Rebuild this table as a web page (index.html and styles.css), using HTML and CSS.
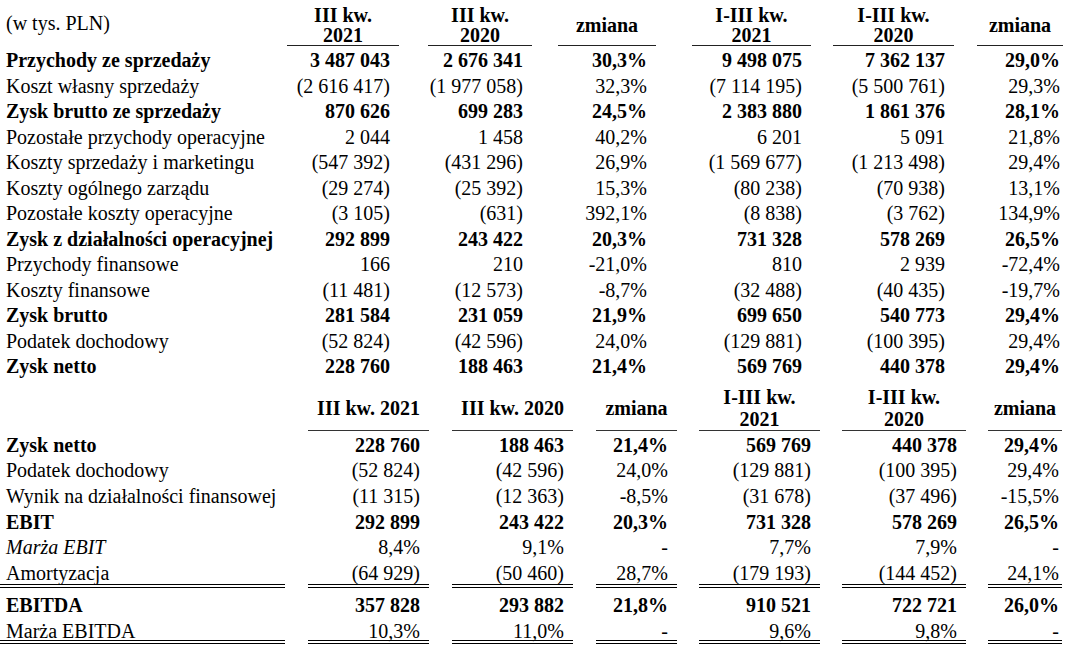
FILE: index.html
```html
<!DOCTYPE html>
<html lang="pl">
<head>
<meta charset="utf-8">
<title>Wyniki finansowe</title>
<link rel="stylesheet" href="styles.css">
</head>
<body>
<div class="sheet">
  <div class="tbl t1">
    <div class="row head">
      <div class="cell lab">(w tys. PLN)</div>
      <div class="cell">III kw.<br>2021</div>
      <div class="cell">III kw.<br>2020</div>
      <div class="cell">zmiana</div>
      <div class="cell">I-III kw.<br>2021</div>
      <div class="cell">I-III kw.<br>2020</div>
      <div class="cell">zmiana</div>
    </div>
    <div class="row b">
      <div class="cell lab">Przychody ze sprzedaży</div>
      <div class="cell">3 487 043</div><div class="cell">2 676 341</div><div class="cell">30,3%</div>
      <div class="cell">9 498 075</div><div class="cell">7 362 137</div><div class="cell">29,0%</div>
    </div>
    <div class="row">
      <div class="cell lab">Koszt własny sprzedaży</div>
      <div class="cell">(2 616 417)</div><div class="cell">(1 977 058)</div><div class="cell">32,3%</div>
      <div class="cell">(7 114 195)</div><div class="cell">(5 500 761)</div><div class="cell">29,3%</div>
    </div>
    <div class="row b">
      <div class="cell lab">Zysk brutto ze sprzedaży</div>
      <div class="cell">870 626</div><div class="cell">699 283</div><div class="cell">24,5%</div>
      <div class="cell">2 383 880</div><div class="cell">1 861 376</div><div class="cell">28,1%</div>
    </div>
    <div class="row">
      <div class="cell lab">Pozostałe przychody operacyjne</div>
      <div class="cell">2 044</div><div class="cell">1 458</div><div class="cell">40,2%</div>
      <div class="cell">6 201</div><div class="cell">5 091</div><div class="cell">21,8%</div>
    </div>
    <div class="row">
      <div class="cell lab">Koszty sprzedaży i marketingu</div>
      <div class="cell">(547 392)</div><div class="cell">(431 296)</div><div class="cell">26,9%</div>
      <div class="cell">(1 569 677)</div><div class="cell">(1 213 498)</div><div class="cell">29,4%</div>
    </div>
    <div class="row">
      <div class="cell lab">Koszty ogólnego zarządu</div>
      <div class="cell">(29 274)</div><div class="cell">(25 392)</div><div class="cell">15,3%</div>
      <div class="cell">(80 238)</div><div class="cell">(70 938)</div><div class="cell">13,1%</div>
    </div>
    <div class="row">
      <div class="cell lab">Pozostałe koszty operacyjne</div>
      <div class="cell">(3 105)</div><div class="cell">(631)</div><div class="cell">392,1%</div>
      <div class="cell">(8 838)</div><div class="cell">(3 762)</div><div class="cell">134,9%</div>
    </div>
    <div class="row b">
      <div class="cell lab">Zysk z działalności operacyjnej</div>
      <div class="cell">292 899</div><div class="cell">243 422</div><div class="cell">20,3%</div>
      <div class="cell">731 328</div><div class="cell">578 269</div><div class="cell">26,5%</div>
    </div>
    <div class="row">
      <div class="cell lab">Przychody finansowe</div>
      <div class="cell">166</div><div class="cell">210</div><div class="cell">-21,0%</div>
      <div class="cell">810</div><div class="cell">2 939</div><div class="cell">-72,4%</div>
    </div>
    <div class="row">
      <div class="cell lab">Koszty finansowe</div>
      <div class="cell">(11 481)</div><div class="cell">(12 573)</div><div class="cell">-8,7%</div>
      <div class="cell">(32 488)</div><div class="cell">(40 435)</div><div class="cell">-19,7%</div>
    </div>
    <div class="row b">
      <div class="cell lab">Zysk brutto</div>
      <div class="cell">281 584</div><div class="cell">231 059</div><div class="cell">21,9%</div>
      <div class="cell">699 650</div><div class="cell">540 773</div><div class="cell">29,4%</div>
    </div>
    <div class="row">
      <div class="cell lab">Podatek dochodowy</div>
      <div class="cell">(52 824)</div><div class="cell">(42 596)</div><div class="cell">24,0%</div>
      <div class="cell">(129 881)</div><div class="cell">(100 395)</div><div class="cell">29,4%</div>
    </div>
    <div class="row b">
      <div class="cell lab">Zysk netto</div>
      <div class="cell">228 760</div><div class="cell">188 463</div><div class="cell">21,4%</div>
      <div class="cell">569 769</div><div class="cell">440 378</div><div class="cell">29,4%</div>
    </div>
  </div>

  <div class="tbl t2">
    <div class="row head">
      <div class="cell lab"></div>
      <div class="cell">III kw. 2021</div>
      <div class="cell">III kw. 2020</div>
      <div class="cell">zmiana</div>
      <div class="cell">I-III kw.<br>2021</div>
      <div class="cell">I-III kw.<br>2020</div>
      <div class="cell">zmiana</div>
    </div>
    <div class="row b">
      <div class="cell lab">Zysk netto</div>
      <div class="cell">228 760</div><div class="cell">188 463</div><div class="cell">21,4%</div>
      <div class="cell">569 769</div><div class="cell">440 378</div><div class="cell">29,4%</div>
    </div>
    <div class="row">
      <div class="cell lab">Podatek dochodowy</div>
      <div class="cell">(52 824)</div><div class="cell">(42 596)</div><div class="cell">24,0%</div>
      <div class="cell">(129 881)</div><div class="cell">(100 395)</div><div class="cell">29,4%</div>
    </div>
    <div class="row">
      <div class="cell lab">Wynik na działalności finansowej</div>
      <div class="cell">(11 315)</div><div class="cell">(12 363)</div><div class="cell">-8,5%</div>
      <div class="cell">(31 678)</div><div class="cell">(37 496)</div><div class="cell">-15,5%</div>
    </div>
    <div class="row b">
      <div class="cell lab">EBIT</div>
      <div class="cell">292 899</div><div class="cell">243 422</div><div class="cell">20,3%</div>
      <div class="cell">731 328</div><div class="cell">578 269</div><div class="cell">26,5%</div>
    </div>
    <div class="row">
      <div class="cell lab it">Marża EBIT</div>
      <div class="cell">8,4%</div><div class="cell">9,1%</div><div class="cell">-</div>
      <div class="cell">7,7%</div><div class="cell">7,9%</div><div class="cell">-</div>
    </div>
    <div class="row dbl">
      <div class="cell lab">Amortyzacja</div>
      <div class="cell">(64 929)</div><div class="cell">(50 460)</div><div class="cell">28,7%</div>
      <div class="cell">(179 193)</div><div class="cell">(144 452)</div><div class="cell">24,1%</div>
    </div>
    <div class="row b ebitda">
      <div class="cell lab">EBITDA</div>
      <div class="cell">357 828</div><div class="cell">293 882</div><div class="cell">21,8%</div>
      <div class="cell">910 521</div><div class="cell">722 721</div><div class="cell">26,0%</div>
    </div>
    <div class="row dbl last">
      <div class="cell lab">Marża EBITDA</div>
      <div class="cell">10,3%</div><div class="cell">11,0%</div><div class="cell">-</div>
      <div class="cell">9,6%</div><div class="cell">9,8%</div><div class="cell">-</div>
    </div>
  </div>
</div>
</body>
</html>
```

FILE: styles.css
```css
html, body {
  margin: 0;
  padding: 0;
  background: #fff;
}

body {
  font-family: "Liberation Serif", "Times New Roman", serif;
  font-size: 20px;
  color: #000;
}

.sheet {
  width: 1075px;
}

.tbl {
  display: grid;
}

.t1 {
  --g1: 23px; --g2: 29px; --g3: 26px; --g4: 36px; --g5: 22px; --g6: 23px;
  grid-template-columns: 264px 135px 133px 124px 155px 143px 109px;
  grid-template-rows: 46px;
  grid-auto-rows: 25.5px;
}

.t2 {
  --g1: 23px; --g2: 23px; --g3: 23px; --g4: 22px; --g5: 22px; --g6: 22px;
  margin-top: 6px;
  grid-template-columns: 285px 144px 144px 104px 143px 146px 96px;
  grid-template-rows: 47px repeat(5, 25.6px) 30px 29px 27px;
}

.row {
  display: contents;
}

.cell {
  box-sizing: border-box;
  display: flex;
  align-items: center;
  justify-content: flex-end;
  text-align: right;
  white-space: nowrap;
  line-height: 22px;
  padding: 3px 9px 0 0;
}

.row > :nth-child(2) { margin-left: var(--g1); }
.row > :nth-child(3) { margin-left: var(--g2); }
.row > :nth-child(4) { margin-left: var(--g3); }
.row > :nth-child(5) { margin-left: var(--g4); }
.row > :nth-child(6) { margin-left: var(--g5); }
.row > :nth-child(7) { margin-left: var(--g6); padding-right: 3px; }

.cell.lab {
  justify-content: flex-start;
  text-align: left;
  padding-left: 6px;
}

.it {
  font-style: italic;
}

.b .cell {
  font-weight: bold;
}

.head .cell {
  font-weight: bold;
  justify-content: center;
  text-align: center;
  padding: 0;
}

.t1 .head .cell {
  line-height: 20px;
  padding-top: 5px;
  border-bottom: 1px solid #222;
}

.t2 .head .cell {
  line-height: 22px;
  padding-top: 3px;
  border-bottom: 1px solid #333;
}

.head .cell.lab {
  font-weight: normal;
  justify-content: flex-start;
  padding-left: 6px;
  padding-top: 0;
  border-bottom: none;
}

.dbl .cell {
  border-bottom: 4px double #000;
}

.ebitda .cell {
  padding-top: 4px;
}

.last .cell {
  padding-top: 5px;
}
```
